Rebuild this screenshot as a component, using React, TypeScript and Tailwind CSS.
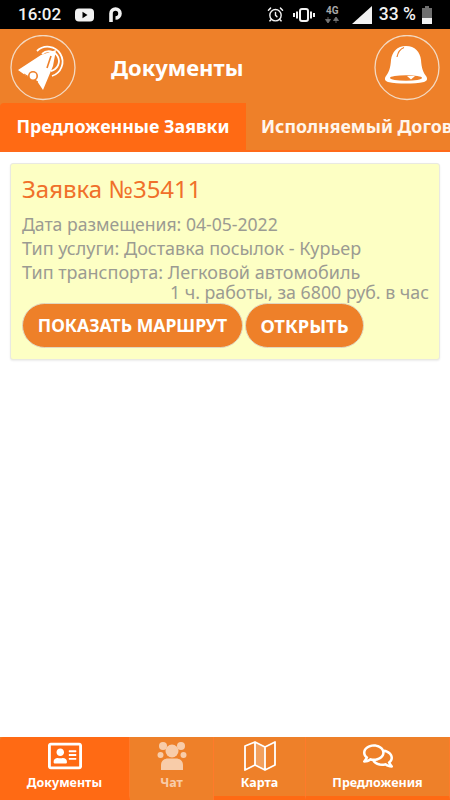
import React from 'react';
import { FaRegAddressCard, FaRegComments } from 'react-icons/fa';
import { AlarmClock } from 'lucide-react';

const font = { fontFamily: '"Noto Sans", "Open Sans", sans-serif' };
const roboto = { fontFamily: 'Roboto, sans-serif' };

const StatusBar = () => (
  <div className="h-[29px] bg-black flex items-center text-[#f2f2f2] pl-[18px] pr-[18px] shrink-0">
    <span className="text-[17px] font-medium leading-none" style={roboto}>16:02</span>
    <svg width="19" height="14" viewBox="0 0 19 14" className="ml-[14px]">
      <rect x="0" y="0.5" width="19" height="13" rx="4" fill="#f2f2f2" />
      <path d="M7.5 3.8 L12.5 7 L7.5 10.2 Z" fill="#000" />
    </svg>
    <svg width="13" height="16" viewBox="0 0 13 16" className="ml-[15px]">
      <path d="M2 15 V6.5 A4.5 4.5 0 1 1 6.5 11" fill="none" stroke="#f2f2f2" strokeWidth="3.6" />
    </svg>
    <div className="flex-1" />
    <AlarmClock size={17} strokeWidth={2} />
    <svg width="22" height="14" viewBox="0 0 22 14" className="ml-[9px]">
      <rect x="7" y="1" width="8" height="12" rx="2" fill="none" stroke="#f2f2f2" strokeWidth="2" />
      <path d="M4 3.5 V10.5 M18 3.5 V10.5" stroke="#f2f2f2" strokeWidth="2" />
      <path d="M1 5 V9 M21 5 V9" stroke="#f2f2f2" strokeWidth="2" />
    </svg>
    <div className="ml-[10px] w-[15px] flex flex-col items-center leading-none text-[#a8a8a8]" style={roboto}>
      <span className="text-[10px] font-bold leading-[10px]">4G</span>
      <svg width="14" height="6" viewBox="0 0 14 6" className="mt-[1px]">
        <path d="M3 0 V3 M0.5 2.5 H5.5 L3 6 Z M11 6 V3 M8.5 3.5 H13.5 L11 0 Z" fill="#777" stroke="#777" strokeWidth="0.8" />
      </svg>
    </div>
    <svg width="20" height="18" viewBox="0 0 20 18" className="ml-[12px]">
      <path d="M0 18 L20 0 V18 Z" fill="#f2f2f2" />
    </svg>
    <span className="ml-[7px] text-[17.5px] font-medium leading-none whitespace-nowrap" style={roboto}>33 %</span>
    <svg width="10" height="18" viewBox="0 0 10 18" className="ml-[6px]">
      <path d="M3 0 H7 V2 H10 V18 H0 V2 H3 Z" fill="#6f6f6f" />
      <rect x="0" y="12" width="10" height="6" fill="#f2f2f2" />
    </svg>
  </div>
);

const Logo = () => (
  <svg width="66" height="66" viewBox="0 0 66 66" className="shrink-0">
    <circle cx="33" cy="32.5" r="32" fill="none" stroke="#f3d9c2" strokeWidth="1.3" />
    <path d="M27 16 A15 15 0 1 1 42 41" fill="none" stroke="#fff" strokeWidth="1.8" />
    <path d="M32 19 A10 10 0 1 1 41 36" fill="none" stroke="#fff" strokeWidth="1.8" />
    <path d="M8 35 L31 20 L46 15 L43 31 L33 55 L27 46 L15 40 Z" fill="#fff" />
    <path d="M41 21 L37 33" stroke="#ee8029" strokeWidth="1.6" />
    <path d="M14 39 L28 47" stroke="#ee8029" strokeWidth="1" />
    <circle cx="23" cy="41" r="5" fill="#ee8029" />
    <circle cx="23" cy="41" r="3.4" fill="#fff" />
  </svg>
);

const Bell = () => (
  <svg width="66" height="66" viewBox="0 0 66 66" className="shrink-0">
    <circle cx="33" cy="32.5" r="32" fill="none" stroke="#f3d9c2" strokeWidth="1.3" />
    <path d="M32 11 C23 11 18 17 17 25 C16.5 33 15 37 12 41 C10 44 11 46 14 47 C24 49 40 49 50 47 C53 46 54 44 52 41 C49 37 47.5 33 47 25 C46 17 41 11 32 11 Z" fill="#fff" />
    <ellipse cx="32" cy="43" rx="16" ry="2.7" fill="#ee8029" />
    <path d="M33 41 H41 L37 44.5 Z" fill="#fff" />
    <path d="M23 22 C24 17 26 14 30 12.5" fill="none" stroke="#ee8029" strokeWidth="1.2" />
  </svg>
);

const Tabs = () => (
  <div className="h-[49px] flex overflow-hidden shrink-0 border-b-[2px] border-[#ff6a1a]">
    <div className="w-[246px] shrink-0 bg-[#ff6a14] rounded-tl-[4px] flex items-center justify-center text-white font-bold text-[17.8px]">
      Предложенные Заявки
    </div>
    <div className="pl-[15px] flex items-center whitespace-nowrap text-[#fff6ec] font-bold text-[17.8px]">
      Исполняемый Договор
    </div>
  </div>
);

const btnCls = 'h-[45px] rounded-full bg-[#ee8029] text-white font-bold flex items-center justify-center border border-[#e0d8c0]';

const Card = () => (
  <div className="mx-[10px] mt-[11px] h-[197px] bg-[#fdffc4] rounded-[3px] border border-[#e9e9e2] shadow-[0_1px_2px_rgba(0,0,0,0.08)] px-[11px] pt-[9px]">
    <div className="text-[24px] leading-[32px] text-[#f0702a]">Заявка №35411</div>
    <div className="mt-[7px] leading-[24px] text-[17.6px] text-[#9b9b92] whitespace-nowrap">Дата размещения: 04-05-2022</div>
    <div className="leading-[24px] text-[18px] text-[#9b9b92] whitespace-nowrap">Тип услуги: Доставка посылок - Курьер</div>
    <div className="leading-[24px] text-[18px] text-[#9b9b92] whitespace-nowrap">Тип транспорта: Легковой автомобиль</div>
    <div className="leading-[16px] text-[17.8px] text-[#9b9b92] text-right mr-[-1px] whitespace-nowrap">1 ч. работы, за 6800 руб. в час</div>
    <div className="mt-[3px] flex gap-[2px]">
      <div className={`w-[221px] text-[17.6px] ${btnCls}`}>ПОКАЗАТЬ МАРШРУТ</div>
      <div className={`w-[119px] text-[18.4px] ${btnCls}`}>ОТКРЫТЬ</div>
    </div>
  </div>
);

const ChatIcon = () => (
  <svg width="30" height="30" viewBox="0 0 30 30">
    <circle cx="6" cy="5" r="4" fill="#fff" />
    <circle cx="24" cy="5" r="4" fill="#fff" />
    <circle cx="3.5" cy="14" r="3" fill="#fff" />
    <circle cx="26.5" cy="14" r="3" fill="#fff" />
    <circle cx="15" cy="10" r="6.5" fill="#fff" />
    <path d="M4 29 V24 C4 20 7 17.5 11 17.5 H19 C23 17.5 26 20 26 24 V29 Z" fill="#fff" />
  </svg>
);

const MapIcon = () => (
  <svg width="32" height="30" viewBox="0 0 32 30">
    <path d="M11 1 L21 6 V29 L11 24 Z" fill="#fff" opacity="0.25" />
    <path d="M1 5 L11 1 L21 6 L31 1 V24 L21 29 L11 24 L1 29 Z M11 1 V24 M21 6 V29" fill="none" stroke="#fff" strokeWidth="1.8" strokeLinejoin="round" />
  </svg>
);

const NavItem = ({ label, icon, width, active, faded }: { label: string; icon: React.ReactNode; width: string; active?: boolean; faded?: boolean }) => (
  <div className={`${width} flex flex-col items-center pt-[3px] border-r border-[#ff7a2a] ${faded ? '' : 'border-b-[4px] border-b-[#ff6a14]'} ${active ? 'bg-[#ff6a14] rounded-tl-[4px]' : ''}`}>
    <div className={`h-[31px] flex items-center justify-center ${faded ? 'opacity-60' : ''}`}>{icon}</div>
    <span className={`mt-[4px] text-[12.5px] leading-[16px] font-bold text-white ${faded ? 'opacity-60' : ''}`}>{label}</span>
  </div>
);

const BottomNav = () => (
  <div className="h-[63px] bg-[#ee8029] flex shrink-0">
    <NavItem label="Документы" width="w-[130px]" active icon={<FaRegAddressCard size={34} color="#fff" />} />
    <NavItem label="Чат" width="w-[84px]" faded icon={<ChatIcon />} />
    <NavItem label="Карта" width="w-[92px]" icon={<MapIcon />} />
    <NavItem label="Предложения" width="flex-1" icon={<FaRegComments size={30} color="#fff" />} />
  </div>
);

export default function App() {
  return (
    <div className="w-[450px] h-[800px] bg-white flex flex-col overflow-hidden" style={font}>
      <StatusBar />
      <div className="h-[74px] bg-[#ee8029] flex items-center pt-[3px] pl-[10px] pr-[10px] shrink-0">
        <Logo />
        <div className="ml-[35px] flex-1 text-white font-bold text-[22px]">Документы</div>
        <Bell />
      </div>
      <div className="bg-[#ee8029] shrink-0"><Tabs /></div>
      <div className="flex-1"><Card /></div>
      <BottomNav />
    </div>
  );
}
